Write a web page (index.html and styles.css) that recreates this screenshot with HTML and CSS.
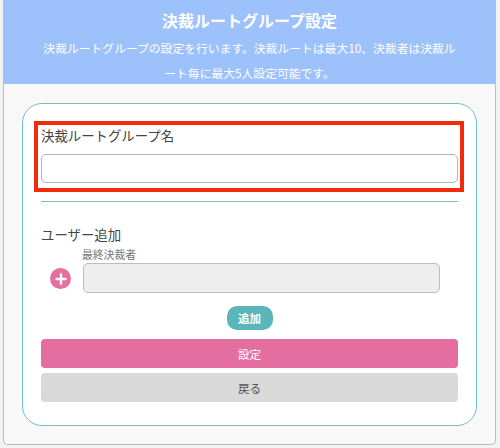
FILE: index.html
```html
<!DOCTYPE html>
<html lang="ja">
<head>
    <meta charset="UTF-8">
    <title>決裁ルートグループ設定</title>
    <link rel="stylesheet" href="styles.css">
</head>
<body>
    <div class="panel">
        <div class="header">
            <h1 class="header-title">決裁ルートグループ設定</h1>
            <p class="header-text">決裁ルートグループの設定を行います。決裁ルートは最大10、決裁者は決裁ルート毎に最大5人設定可能です。</p>
        </div>
        <div class="content">
            <div class="card">
                <div class="name-box">
                    <label class="field-label">決裁ルートグループ名</label>
                    <input class="name-input" type="text">
                </div>
                <hr class="divider">
                <div class="section-title">ユーザー追加</div>
                <div class="approver">
                    <div class="add-icon">
                        <svg width="12" height="12" viewBox="0 0 12 12"><path d="M6 1.5v9M1.5 6h9" stroke="#fff" stroke-width="2.4" stroke-linecap="round"/></svg>
                    </div>
                    <div class="approver-field">
                        <div class="approver-label">最終決裁者</div>
                        <input class="approver-input" type="text" disabled>
                    </div>
                </div>
                <div class="add-row">
                    <button class="btn-add">追加</button>
                </div>
                <button class="btn btn-submit">設定</button>
                <button class="btn btn-back">戻る</button>
            </div>
        </div>
    </div>
</body>
</html>
```

FILE: styles.css
```css
* {
    box-sizing: border-box;
}

body {
    margin: 0;
    background: #f2f2f2;
    font-family: "Noto Sans CJK JP", "Noto Sans", sans-serif;
    color: #444;
}

.panel {
    width: 493px;
    height: 445px;
    margin-left: 3px;
    background: #f8f8f8;
    border: 1px solid #bcbcbc;
    border-top: 0;
    border-radius: 0 0 5px 5px;
}

.header {
    height: 84px;
    padding-top: 9px;
    background: #9dc1fa;
    color: #fff;
    text-align: center;
}

.header-title {
    margin: 0;
    font-size: 16px;
    line-height: 22px;
    font-weight: 700;
}

.header-text {
    width: 420px;
    margin: 5px auto 0;
    font-size: 11.8px;
    line-height: 24.5px;
}

.content {
    padding: 19px 18px 0;
}

.card {
    height: 323px;
    padding: 17px 12px 0 11px;
    background: #fff;
    border: 1px solid #6fc1c1;
    border-radius: 20px;
}

.name-box {
    height: 71px;
    padding: 0 2px 0 3px;
    border: 4px solid #f22b0a;
}

.field-label {
    display: block;
    font-size: 13.4px;
    line-height: 20px;
}

.name-input {
    display: block;
    width: 100%;
    height: 29px;
    margin-top: 9px;
    background: #fff;
    border: 1px solid #b5b5b5;
    border-radius: 5px;
}

.divider {
    width: 417px;
    height: 1px;
    margin: 9px 0 0 7px;
    background: #6cc4c4;
    border: 0;
}

.section-title {
    margin: 22px 0 0 7px;
    font-size: 13.4px;
    line-height: 20px;
}

.approver {
    display: flex;
    align-items: flex-end;
    margin: 3px 0 0 7px;
}

.add-icon {
    display: flex;
    align-items: center;
    justify-content: center;
    width: 21px;
    height: 21px;
    margin: 0 0 4px 9px;
    background: #e56f9f;
    border-radius: 50%;
}

.approver-field {
    width: 357px;
    margin-left: 12px;
}

.approver-label {
    margin-left: -1px;
    font-size: 10.8px;
    line-height: 14px;
    color: #777;
}

.approver-input {
    display: block;
    width: 100%;
    height: 30px;
    margin-top: 2px;
    background: #eee;
    border: 1px solid #bdbdbd;
    border-radius: 5px;
}

.add-row {
    display: flex;
    justify-content: center;
    width: 417px;
    margin: 13px 0 0 7px;
}

.btn-add {
    width: 46px;
    height: 24px;
    padding: 0;
    background: #5ab6b8;
    border: 0;
    border-radius: 10px;
    color: #fff;
    font-family: inherit;
    font-size: 11.5px;
    font-weight: 700;
}

.btn {
    display: block;
    width: 417px;
    height: 29px;
    margin-left: 7px;
    padding: 0;
    border: 0;
    border-radius: 4px;
    font-family: inherit;
    font-size: 11.5px;
}

.btn-submit {
    margin-top: 9px;
    background: #e36e9f;
    color: #fff;
}

.btn-back {
    margin-top: 5px;
    background: #d9d9d9;
    color: #555;
}
```
